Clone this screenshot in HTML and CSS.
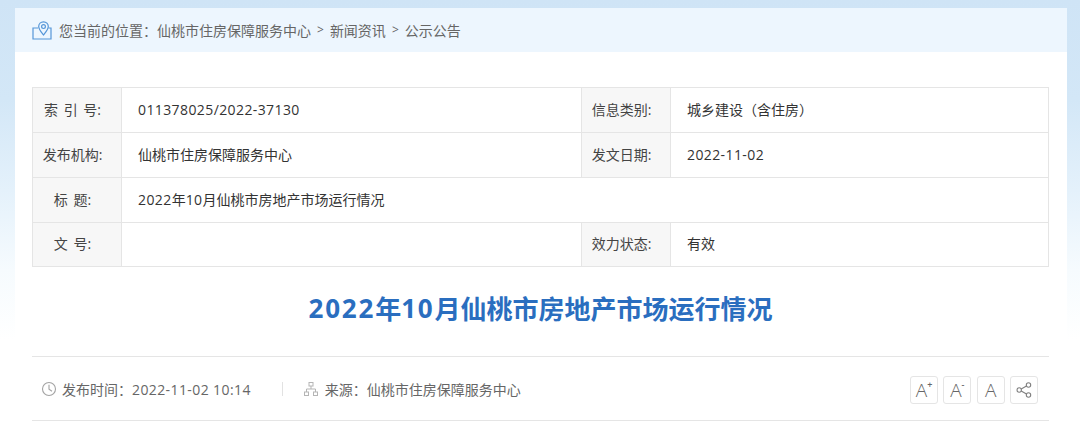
FILE: index.html
```html
<!DOCTYPE html>
<html lang="zh-CN">
<head>
<meta charset="utf-8">
<title>2022年10月仙桃市房地产市场运行情况</title>
<link rel="stylesheet" href="styles.css">
</head>
<body>
<main class="page">
  <nav class="crumb">
    <svg class="crumb-icon" width="20" height="19" viewBox="0 0 20 19" fill="none" stroke="#5596d8" stroke-width="1.200">
      <path d="M6 7H1V18H19V7H16.500"/>
      <path d="M11.500 .8C8.800 .8 6.700 2.800 6.700 5.500C6.700 8.500 9.800 11.800 11.500 14C13.200 11.800 16.300 8.500 16.300 5.500C16.300 2.800 14.200 .8 11.500 .8Z"/>
      <circle cx="11.500" cy="5.600" r="1.900"/>
    </svg>
    <span>您当前的位置：仙桃市住房保障服务中心</span><span class="sep">&gt;</span><span>新闻资讯</span><span class="sep">&gt;</span><span>公示公告</span>
  </nav>
  <section class="article">
    <table class="info">
      <colgroup><col class="c-label"><col class="c-value"><col class="c-label2"><col></colgroup>
      <tr><th>索 引 号:</th><td><span class="num">011378025/2022-37130</span></td><th>信息类别:</th><td>城乡建设（含住房）</td></tr>
      <tr><th>发布机构:</th><td>仙桃市住房保障服务中心</td><th>发文日期:</th><td><span class="num">2022-11-02</span></td></tr>
      <tr><th>标 题:</th><td colspan="3"><span class="num">2022</span>年<span class="num">10</span>月仙桃市房地产市场运行情况</td></tr>
      <tr class="last"><th>文 号:</th><td></td><th>效力状态:</th><td>有效</td></tr>
    </table>
    <h1 class="title"><span class="big">2022</span>年<span class="big">10</span>月仙桃市房地产市场运行情况</h1>
    <div class="meta">
      <div class="meta-left">
        <svg width="16" height="16" viewBox="0 0 16 16" fill="none" stroke="#a3a3a3" stroke-width="1.100"><circle cx="8" cy="8" r="6.500"/><path d="M8 3.800V8.300L11 10.300"/></svg>
        <span class="m-time">发布时间：<span class="num">2022-11-02 10:14</span></span>
        <i class="divider"></i>
        <svg class="src-icon" width="14" height="14" viewBox="0 0 14 14" fill="none" stroke="#b5b5b5" stroke-width="1"><rect x="5" y=".5" width="4" height="3.500"/><rect x=".5" y="10" width="4" height="3.500"/><rect x="9.500" y="10" width="4" height="3.500"/><path d="M7 4V7M2.500 10V7H11.500V10"/></svg>
        <span>来源：仙桃市住房保障服务中心</span>
      </div>
      <div class="tools">
        <button class="tool" type="button">A<sup>+</sup></button>
        <button class="tool" type="button">A<sup>-</sup></button>
        <button class="tool" type="button">A</button>
        <button class="tool" type="button" aria-label="分享">
          <svg width="16" height="16" viewBox="0 0 16 16" fill="none" stroke="#808080" stroke-width="1.100"><circle cx="3.200" cy="8" r="2.200"/><circle cx="12.500" cy="3" r="2.200"/><circle cx="12.500" cy="13" r="2.200"/><path d="M5.200 7L10.500 4M5.200 9L10.500 12"/></svg>
        </button>
      </div>
    </div>
  </section>
</main>
</body>
</html>
```
FILE: styles.css
```css
* { box-sizing: border-box; }
html, body { margin: 0; height: 437px; overflow: hidden; }
body {
  background: linear-gradient(180deg, #cfe4f6 0, #d3e7f7 100px, #e4f1fb 190px, #f6fbfe 270px, #fff 340px);
  font-family: "Open Sans", "Noto Sans CJK SC", sans-serif;
  font-size: 14px;
  color: #333;
  padding: 8px 13px 0 15px;
}
.page { background: #fff; height: 429px; }
.crumb {
  height: 44px;
  background: #edf6fe;
  display: flex;
  align-items: center;
  padding: 0 0 1px 17px;
  color: #666;
  font-size: 14px;
}
.crumb-icon { margin: 2px 7px 0 0; flex: none; }
.sep { margin: 0 6px; font-size: 12px; }
.article { padding: 35px 18px 0 17px; }
.num { letter-spacing: .4px; }
.info {
  width: 1017px;
  height: 179px;
  border-collapse: collapse;
  table-layout: fixed;
}
.c-label { width: 89px; }
.c-value { width: 460px; }
.c-label2 { width: 89px; }
.info tr { height: 45px; }
.info tr.last { height: 44px; }
.info th, .info td {
  border: 1px solid #e5e5e5;
  font-weight: 400;
  font-size: 14px;
  padding: 0 0 2px;
}
.info tr.last th, .info tr.last td { padding-bottom: 3px; }
.info th {
  background: #f7f7f7;
  text-align: center;
  color: #444;
  word-spacing: 2px;
  padding-right: 9px;
}
.info tr.last th { padding-right: 9px; }
.info td { padding-left: 16px; color: #333; }
.title {
  margin: 0;
  height: 89px;
  padding-bottom: 7px;
  display: flex;
  align-items: center;
  justify-content: center;
  color: #2a6ebf;
  font-size: 26px;
  font-weight: 700;
}
.big { letter-spacing: 1.800px; }
.meta {
  height: 65px;
  border-top: 1px solid #e5e5e5;
  border-bottom: 1px solid #e5e5e5;
  display: flex;
  align-items: center;
  justify-content: space-between;
  padding: 0 11px 0 9px;
  color: #666;
}
.meta-left { display: flex; align-items: center; }
.m-time { margin-left: 5px; }
.src-icon { margin-right: 7px; }
.divider { width: 1px; height: 14px; background: #e2e2e2; margin: 0 21px 0 31px; }
.tools { display: flex; gap: 5.330px; margin-top: 2px; }
.tool {
  width: 28px;
  height: 28px;
  padding: 0;
  background: #fff;
  border: 1px solid #e5e5e5;
  border-radius: 3px;
  display: flex;
  align-items: center;
  justify-content: center;
  font-family: "Open Sans", sans-serif;
  font-size: 19px;
  font-weight: 300;
  color: #666;
}
.tool sup { font-size: 9px; font-weight: 600; line-height: 1; align-self: flex-start; margin-top: 3px; }
```
